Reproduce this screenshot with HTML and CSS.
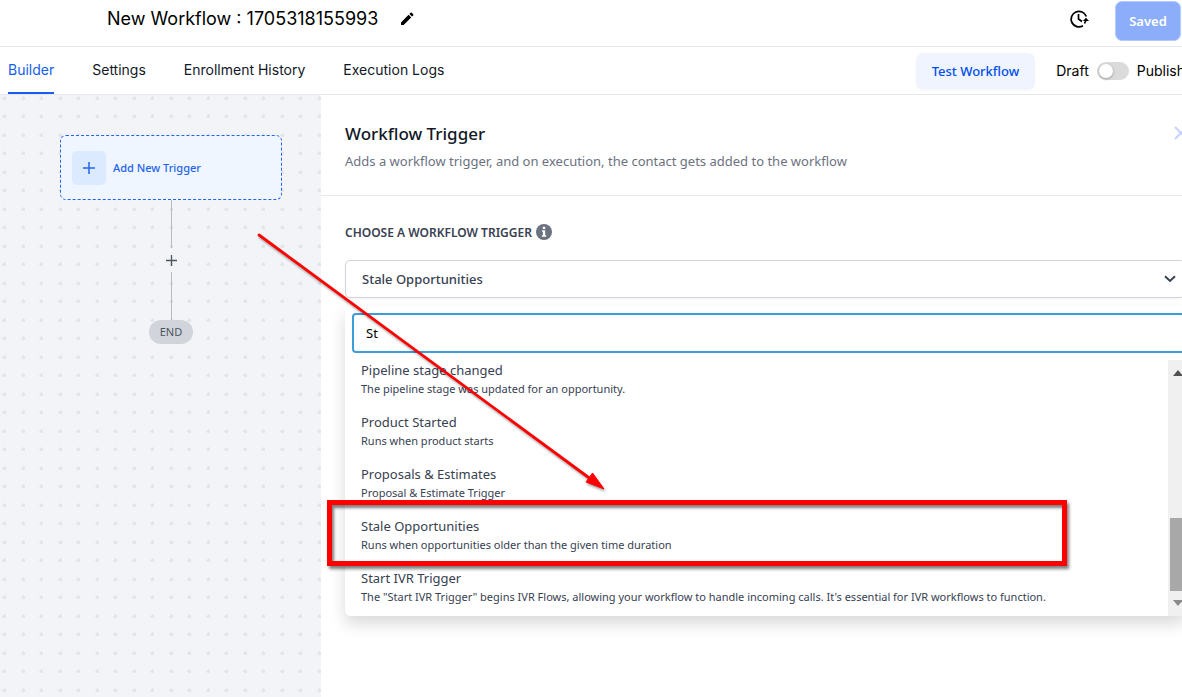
FILE: index.html
```html
<!DOCTYPE html>
<html lang="en">
<head>
    <meta charset="UTF-8">
    <meta name="viewport" content="width=device-width, initial-scale=1.0">
    <title>New Workflow : 1705318155993</title>
    <link rel="stylesheet" href="styles.css">
</head>
<body>
    <div class="app">
        <header class="topbar">
            <h1 class="workflow-name">New Workflow : 1705318155993</h1>
            <button class="icon-button" aria-label="Rename workflow">
                <svg width="16" height="16" viewBox="0 0 16 16"><path d="M2 14v-2.600L9.600 3.800l2.600 2.600L4.600 14zM10.400 3l1.200-1.200q.6-.5 1.200 0l1.400 1.400q.5.6 0 1.200L13 5.600z" fill="#000"/></svg>
            </button>
            <div class="topbar-right">
                <button class="icon-button" aria-label="Version history">
                    <svg width="20" height="20" viewBox="0 0 20 20" fill="none" stroke="#000" stroke-width="1.800"><path d="M14 16.800A7.800 7.800 0 1 1 17.300 7.500"/><path d="M9.500 5v5l3.500 2.500" stroke-width="1.700"/><path d="M17 10.500q0 1.500-1.600 4" stroke-width="1.600"/><path d="M13.800 12L17 8.700l3 3.300z" fill="#000" stroke="none"/></svg>
                </button>
                <button class="saved-button" disabled>Saved</button>
            </div>
        </header>

        <nav class="tabs">
            <a href="#builder" class="tab active">Builder</a>
            <a href="#settings" class="tab">Settings</a>
            <a href="#history" class="tab">Enrollment History</a>
            <a href="#logs" class="tab">Execution Logs</a>
            <div class="tabs-right">
                <button class="test-button">Test Workflow</button>
                <div class="publish-toggle">
                    <span>Draft</span>
                    <input type="checkbox" id="publish" class="switch">
                    <label for="publish">Publish</label>
                </div>
            </div>
        </nav>

        <main class="main">
            <section class="canvas">
                <button class="add-trigger">
                    <span class="plus-box">
                        <svg width="12" height="12" viewBox="0 0 12 12" stroke="#2563eb" stroke-width="1.500"><path d="M6 0v12M0 6h12"/></svg>
                    </span>
                    Add New Trigger
                </button>
                <div class="connector"></div>
                <button class="add-step" aria-label="Add step">
                    <svg width="11" height="11" viewBox="0 0 11 11" stroke="#4b5563" stroke-width="1.300"><path d="M5.500 0v11M0 5.500h11"/></svg>
                </button>
                <div class="connector"></div>
                <div class="end-node">END</div>
            </section>

            <section class="panel">
                <div class="panel-header">
                    <div>
                        <h2>Workflow Trigger</h2>
                        <p>Adds a workflow trigger, and on execution, the contact gets added to the workflow</p>
                    </div>
                    <button class="icon-button" aria-label="Close">
                        <svg width="14" height="14" viewBox="0 0 14 14" fill="none" stroke="#c7d2fe" stroke-width="2"><path d="M1 1l12 12M13 1L1 13"/></svg>
                    </button>
                </div>

                <div class="panel-body">
                    <div class="field-label">
                        <label for="trigger">CHOOSE A WORKFLOW TRIGGER</label>
                        <svg width="16" height="16" viewBox="0 0 16 16"><circle cx="8" cy="8" r="8" fill="#6b7280"/><path d="M6.800 2.800h2.400v2.200H6.800zM6 6.300h3.200v4.900h1v1.500H5.900v-1.500h1V7.800H6z" fill="#fff"/></svg>
                    </div>
                    <div class="select-wrap">
                        <select id="trigger">
                            <option>Stale Opportunities</option>
                        </select>
                        <svg class="chevron" width="12" height="8" viewBox="0 0 12 8" fill="none" stroke="#374151" stroke-width="2"><path d="M1 1.300l5 4.700 5-4.700"/></svg>
                    </div>

                    <div class="dropdown">
                        <input type="text" class="search" aria-label="Search triggers" value="St">
                        <div class="results">
                            <ul class="result-list">
                                <li><h3>Pipeline stage changed</h3><p>The pipeline stage was updated for an opportunity.</p></li>
                                <li><h3>Product Started</h3><p>Runs when product starts</p></li>
                                <li><h3>Proposals &amp; Estimates</h3><p>Proposal &amp; Estimate Trigger</p></li>
                                <li><h3>Stale Opportunities</h3><p>Runs when opportunities older than the given time duration</p></li>
                                <li><h3>Start IVR Trigger</h3><p>The "Start IVR Trigger" begins IVR Flows, allowing your workflow to handle incoming calls. It's essential for IVR workflows to function.</p></li>
                            </ul>
                            <div class="scrollbar">
                                <svg width="10" height="6" viewBox="0 0 10 6"><path d="M0 6l5-6 5 6z" fill="#505050"/></svg>
                                <div class="thumb"></div>
                                <svg width="10" height="6" viewBox="0 0 10 6"><path d="M0 0l5 6 5-6z" fill="#8a8a8a"/></svg>
                            </div>
                        </div>
                    </div>
                </div>
            </section>
        </main>
    </div>

    <!-- Annotations over the page -->
    <svg class="arrow" width="360" height="270" viewBox="0 0 360 270">
        <path d="M5 6L338 251" stroke="#f00" stroke-width="2.800" stroke-linecap="round"/>
        <path d="M350 260l-18-7 6.500-9z" fill="#f00" stroke="#f00"/>
    </svg>
    <div class="highlight"></div>
</body>
</html>
```

FILE: styles.css
```css
* {
    box-sizing: border-box;
}
body {
    margin: 0;
    height: 100vh;
    overflow: hidden;
    position: relative;
    font-family: "Noto Sans", sans-serif;
    font-size: 13px;
    color: #374151;
    background: #fff;
}
h1, h2, h3, p, ul {
    margin: 0;
    padding: 0;
    font-weight: 400;
    list-style: none;
}
button {
    font-family: inherit;
    border: none;
    background: none;
    padding: 0;
    cursor: pointer;
}
svg {
    display: block;
}

/* The app runs a little past the right edge of the window */
.app {
    width: calc(100% + 27px);
    height: 100%;
    display: flex;
    flex-direction: column;
}

/* Top bar */
.topbar {
    flex: none;
    height: 47px;
    display: flex;
    align-items: center;
    gap: 21px;
    padding: 0 28px 8px 107px;
    border-bottom: 1px solid #e5e7eb;
}
.workflow-name {
    font-family: Inter, sans-serif;
    font-size: 18px;
    line-height: 24px;
    color: #000;
}
.topbar-right {
    margin-left: auto;
    display: flex;
    align-items: center;
    gap: 26px;
}
.saved-button {
    height: 40px;
    width: 66px;
    margin-top: 4px;
    border: 1px solid #b2ccff;
    border-radius: 7px;
    background: #8cadfa;
    color: #fff;
    font-size: 13px;
    font-weight: 600;
}

/* Tabs */
.tabs {
    flex: none;
    height: 48px;
    display: flex;
    gap: 38px;
    padding: 0 24px 0 8px;
    border-bottom: 1px solid #e5e7eb;
    font-family: Inter, sans-serif;
    font-size: 14px;
}
.tab {
    display: flex;
    align-items: center;
    color: #111827;
    text-decoration: none;
    border-bottom: 2px solid transparent;
}
.tab.active {
    color: #155eef;
    border-bottom-color: #155eef;
}
.tabs-right {
    margin-left: auto;
    display: flex;
    align-items: center;
    gap: 21px;
}
.test-button {
    height: 36px;
    padding: 0 16px;
    border-radius: 7px;
    background: #eff4ff;
    box-shadow: 0 1px 2px rgba(16, 24, 40, 0.05);
    color: #004eeb;
    font-family: "Noto Sans", sans-serif;
    font-size: 13px;
    font-weight: 500;
}
.publish-toggle {
    display: flex;
    align-items: center;
    gap: 8px;
    color: #000;
}
.switch {
    appearance: none;
    width: 32px;
    height: 18px;
    margin: 0;
    border-radius: 9px;
    background: #dbdbdb;
    display: flex;
    align-items: center;
    padding: 2px;
}
.switch::before {
    content: "";
    width: 14px;
    height: 14px;
    border-radius: 50%;
    background: #fff;
    box-shadow: 0 1px 3px rgba(0, 0, 0, 0.3);
}
.switch:checked {
    justify-content: flex-end;
    background: #155eef;
}

.main {
    flex: 1;
    min-height: 0;
    display: grid;
    grid-template-columns: 321px 1fr;
}

/* Builder canvas with dotted grid */
.canvas {
    --dot: radial-gradient(circle, #e4e5e8 2px, transparent 2px);
    background-color: #f2f4f7;
    background-image: var(--dot), var(--dot), var(--dot), var(--dot);
    background-size: 37px 37px;
    background-position: -14px -15px, 5px -15px, -14px 3px, 5px 3px;
    display: flex;
    flex-direction: column;
    align-items: center;
    padding: 40px 39px 0 60px;
}
.add-trigger {
    width: 100%;
    height: 65px;
    display: flex;
    align-items: center;
    gap: 7px;
    padding: 0 11px;
    border: 1px dashed #2563eb;
    border-radius: 6px;
    background: #eff6ff;
    color: #2563eb;
    font-size: 11px;
    font-weight: 500;
}
.plus-box {
    width: 34px;
    height: 34px;
    display: flex;
    align-items: center;
    justify-content: center;
    border-radius: 5px;
    background: #dbeafe;
}
.connector {
    width: 1px;
    height: 48px;
    background: #b8babd;
}
.add-step {
    height: 24px;
    display: flex;
    align-items: center;
}
.end-node {
    width: 44px;
    height: 24px;
    border-radius: 12px;
    background: #d1d5db;
    color: #4b5563;
    font-size: 11px;
    line-height: 24px;
    text-align: center;
}

/* Trigger panel */
.panel-header {
    height: 101px;
    display: flex;
    justify-content: space-between;
    align-items: flex-start;
    padding: 26px 21px 0 24px;
    border-bottom: 1px solid #e5e7eb;
}
.panel-header h2 {
    font-size: 17px;
    font-weight: 500;
    line-height: 26px;
    color: #111827;
}
.panel-header p {
    margin-top: 4px;
    line-height: 20px;
    color: #6b7280;
}
.panel-header .icon-button {
    margin-top: 5px;
}
.panel-body {
    padding: 26px 24px 0;
}
.field-label {
    display: flex;
    align-items: center;
    gap: 4px;
    height: 20px;
    font-size: 12px;
    font-weight: 600;
}
.select-wrap {
    margin-top: 18px;
    display: grid;
    align-items: center;
}
.select-wrap select,
.select-wrap .chevron {
    grid-area: 1 / 1;
}
.select-wrap select {
    appearance: none;
    width: 100%;
    height: 38px;
    padding: 0 16px;
    border: 1px solid #d1d5db;
    border-radius: 5px;
    background: #fff;
    box-shadow: 0 1px 2px rgba(0, 0, 0, 0.05);
    color: #374151;
    font-family: inherit;
    font-size: 13px;
    font-weight: 500;
}
.chevron {
    justify-self: end;
    margin-right: 9px;
    pointer-events: none;
}

/* Dropdown */
.dropdown {
    margin-top: 8px;
    padding-top: 7px;
    border-radius: 5px;
    background: #fff;
    box-shadow: 0 8px 16px rgba(0, 0, 0, 0.15);
}
.search {
    display: block;
    width: calc(100% - 7px);
    height: 40px;
    margin-left: 7px;
    padding: 0 12px;
    border: 2px solid #3b9edb;
    border-radius: 4px;
    outline: none;
    color: #000;
    font-family: inherit;
    font-size: 13px;
}
.results {
    margin-top: 7px;
    display: flex;
}
.result-list {
    flex: 1;
    display: flex;
    flex-direction: column;
    gap: 14px;
    padding: 0 16px 10px;
}
.result-list h3 {
    font-size: 13px;
    line-height: 20px;
}
.result-list p {
    font-size: 11px;
    line-height: 18px;
}
.scrollbar {
    width: 17px;
    display: flex;
    flex-direction: column;
    align-items: center;
    padding: 10px 0 10px 2px;
    background: #f0f0f0;
}
.scrollbar .thumb {
    width: 100%;
    height: 73px;
    margin: auto 0 9px;
    background: #a8a8a8;
}

/* Annotations */
.arrow {
    position: absolute;
    left: 254px;
    top: 229px;
    filter: drop-shadow(1px 2px 1px rgba(0, 0, 0, 0.35));
    pointer-events: none;
}
.highlight {
    position: absolute;
    left: 327px;
    top: 500px;
    width: 740px;
    height: 66px;
    border: 5px solid #f00;
    box-shadow: 2px 3px 3px rgba(0, 0, 0, 0.5), inset 2px 3px 3px rgba(0, 0, 0, 0.5);
    pointer-events: none;
}
```
